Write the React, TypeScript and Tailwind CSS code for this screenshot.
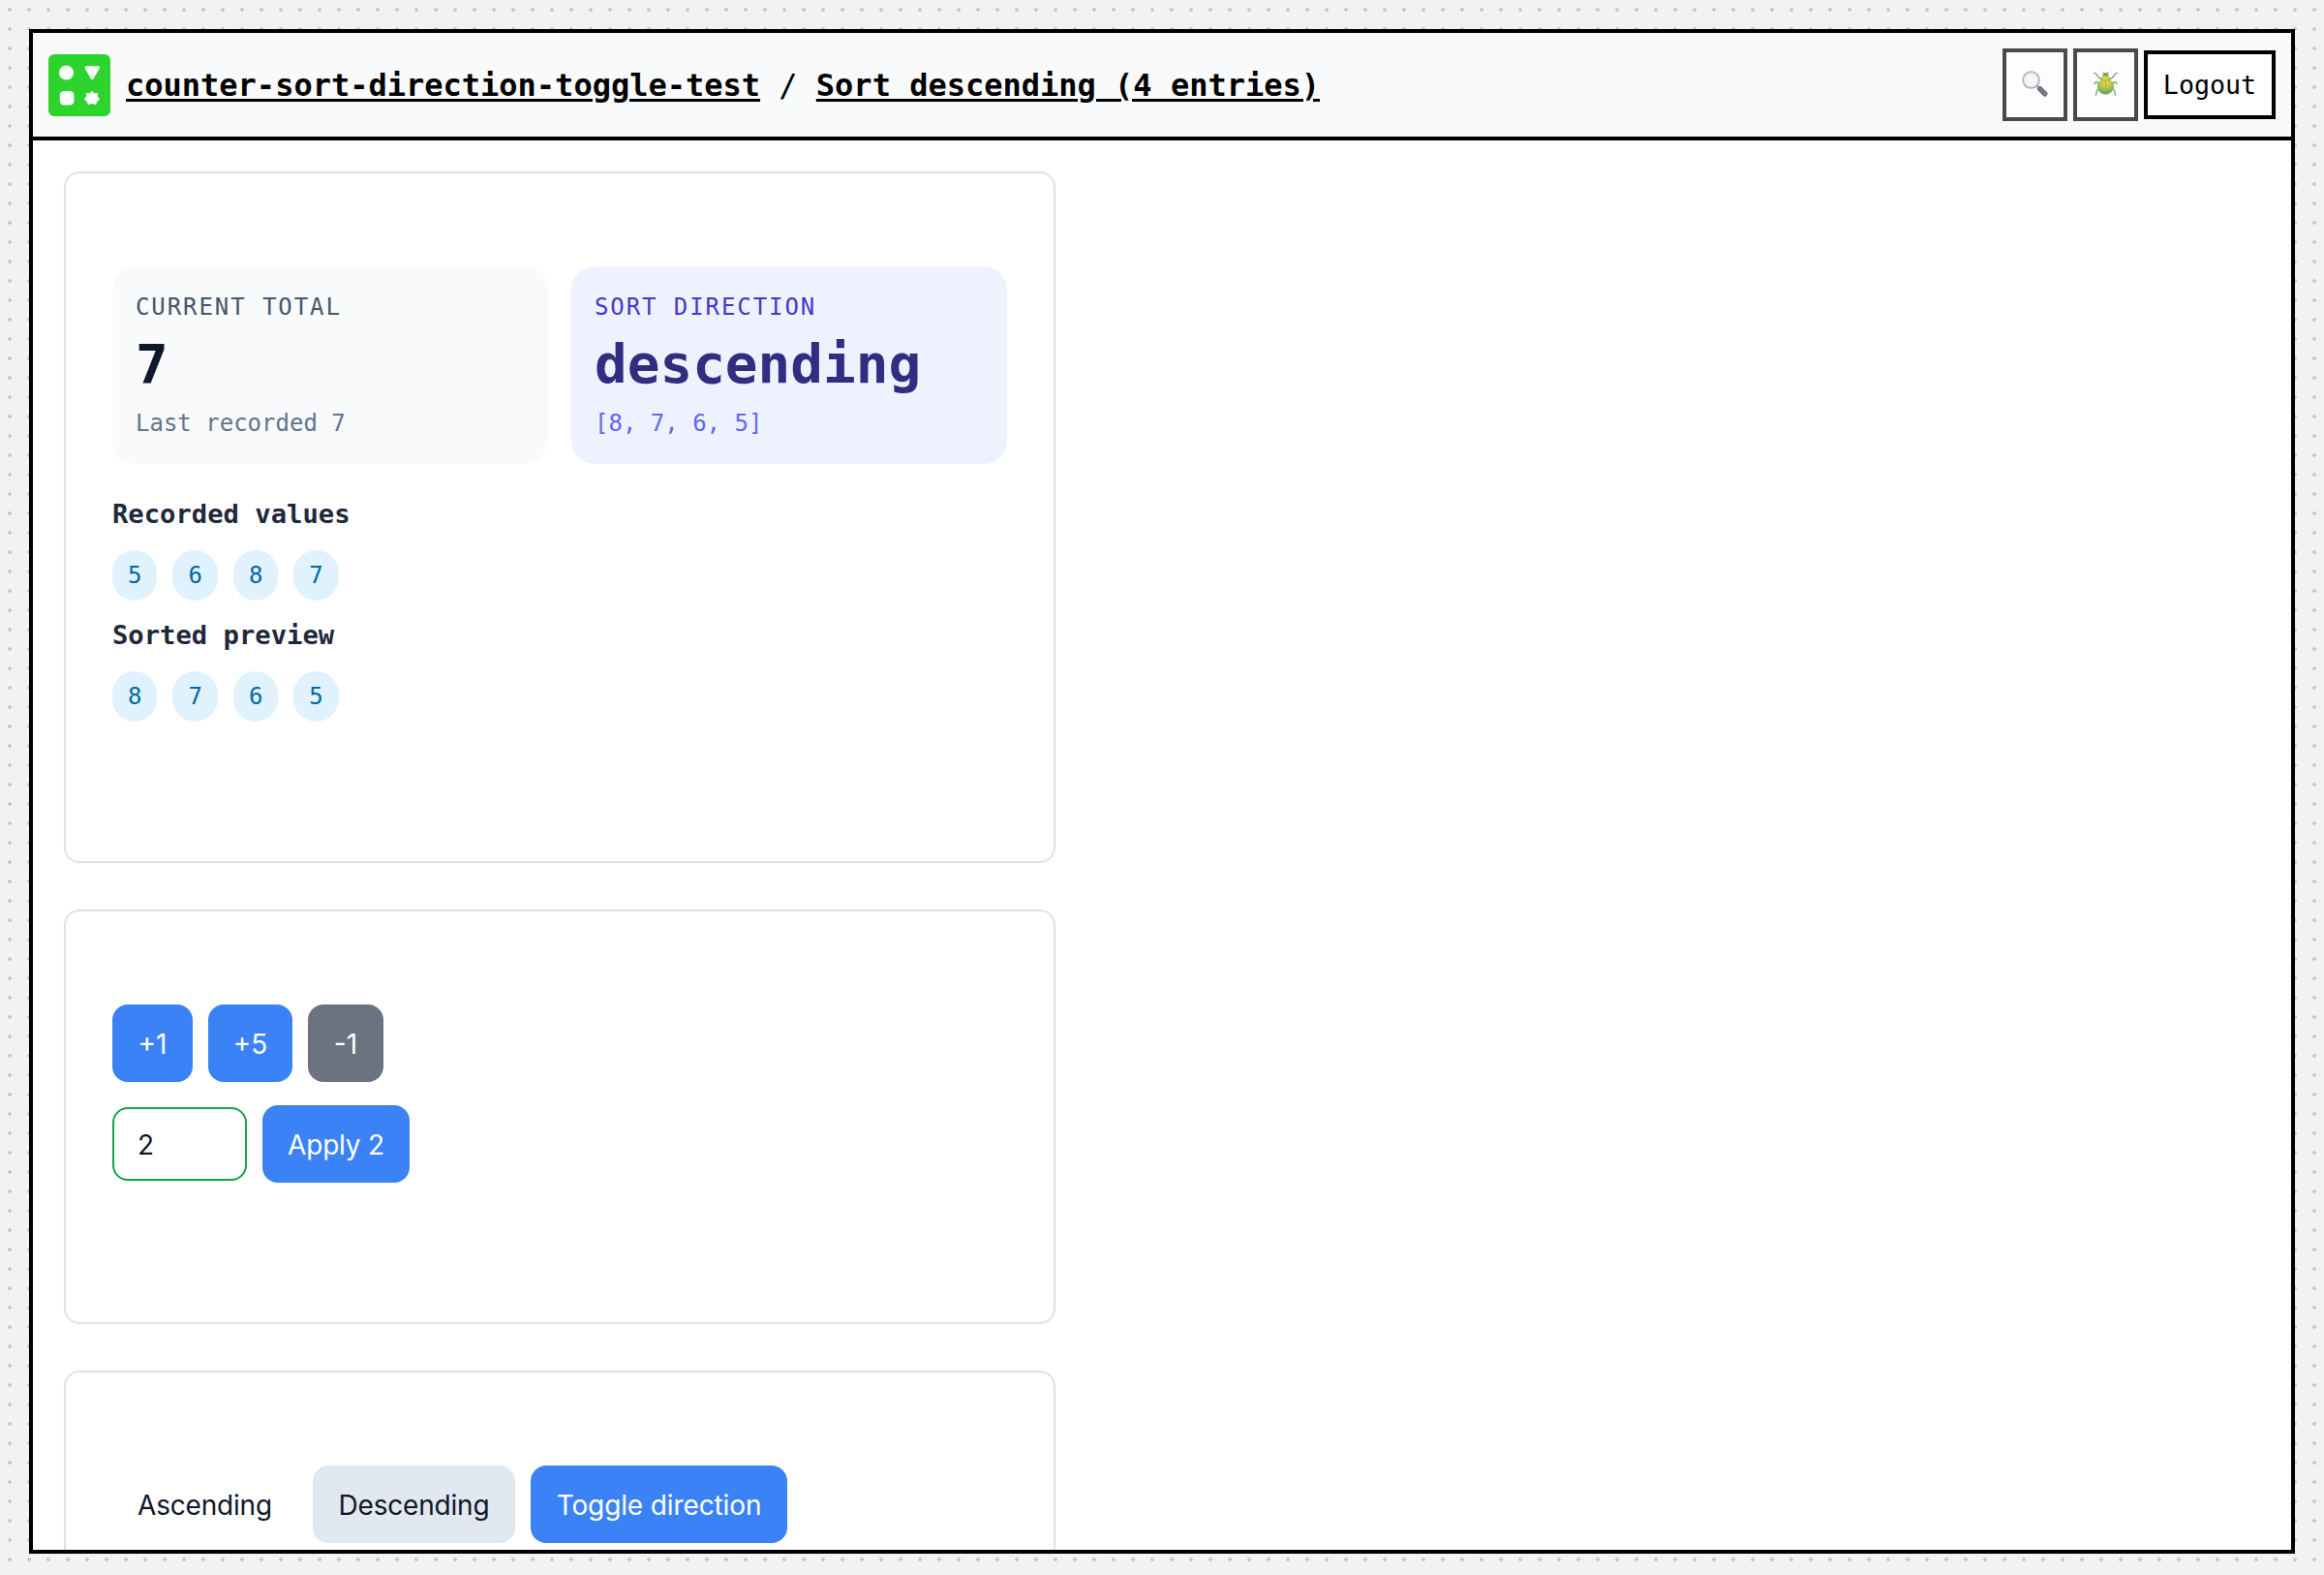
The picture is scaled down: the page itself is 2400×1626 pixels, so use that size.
import type { ReactNode } from 'react';

const mono = "font-['DejaVu_Sans_Mono',monospace]";

function Logo() {
  return (
    <svg viewBox="0 0 64 64" className="h-16 w-16 shrink-0">
      <rect width="64" height="64" rx="6" fill="#2dd42d" />
      <g fill="#fafbfd" stroke="#fafbfd" strokeLinejoin="round">
        <circle cx="18.5" cy="19" r="7.6" strokeWidth="0" />
        <path d="M39 13.8 H51.4 L45.2 24.4 Z" strokeWidth="3.2" />
        <rect x="11.8" y="38" width="14.6" height="14.6" rx="4.2" strokeWidth="0" />
        <path
          d="M45 39 L47.1 41.4 L50.2 41 L50 44.1 L52 46.6 L49.3 48.3 L48.6 51.2 L45 50 L41.4 51.2 L40.7 48.3 L38 46.6 L40 44.1 L39.8 41 L42.9 41.4 Z"
          strokeWidth="1.8"
        />
      </g>
    </svg>
  );
}

function MagnifierIcon() {
  return (
    <svg viewBox="0 0 27 27" className="h-[27px] w-[27px]">
      <defs>
        <linearGradient id="handle" x1="0" y1="1" x2="1" y2="0">
          <stop offset="0" stopColor="#111418" />
          <stop offset="0.55" stopColor="#4a5058" />
          <stop offset="1" stopColor="#15181c" />
        </linearGradient>
        <linearGradient id="rim" x1="0" y1="0" x2="0" y2="1">
          <stop offset="0" stopColor="#8b9db0" />
          <stop offset="1" stopColor="#868a90" />
        </linearGradient>
      </defs>
      <path d="M15.8 15.8 L19 19" stroke="#777b80" strokeWidth="2.4" />
      <path d="M18.6 18.6 L23.8 23.8" stroke="url(#handle)" strokeWidth="5.4" strokeLinecap="round" />
      <circle cx="9.6" cy="9.6" r="8.4" fill="#f3f4f6" stroke="url(#rim)" strokeWidth="1.7" />
      <circle cx="9.6" cy="9.6" r="7.1" fill="none" stroke="#d5dbe1" strokeWidth="0.8" />
    </svg>
  );
}

function BeetleIcon() {
  return (
    <svg viewBox="0 0 27 27" className="h-[27px] w-[27px]">
      <defs>
        <radialGradient id="shell" cx="0.5" cy="0.2" r="0.8">
          <stop offset="0" stopColor="#f5c000" />
          <stop offset="0.35" stopColor="#a8b800" />
          <stop offset="0.7" stopColor="#4f9e0a" />
          <stop offset="1" stopColor="#257010" />
        </radialGradient>
        <radialGradient id="thorax" cx="0.5" cy="0.6" r="0.6">
          <stop offset="0" stopColor="#ffd000" />
          <stop offset="0.6" stopColor="#b8bc00" />
          <stop offset="1" stopColor="#3f8a12" />
        </radialGradient>
      </defs>
      <g fill="none" stroke="#4a7f3c" strokeWidth="1.4" strokeLinecap="round" strokeLinejoin="round">
        <path d="M9 8.4 C6 7.6 5.4 6.6 4.8 4.8 C4.2 3.4 3 2.8 1.6 2.4 M18 8.4 C21 7.6 21.6 6.6 22.2 4.8 C22.8 3.4 24 2.8 25.4 2.4" />
        <path d="M6.4 12.4 L4 11.6 L1.8 13.4 M20.6 12.4 L23 11.6 L25.2 13.4" />
        <path d="M6.4 18.6 C4 19.4 4.2 21.4 4 22.8 L3.4 25 M20.6 18.6 C23 19.4 22.8 21.4 23 22.8 L23.6 25" />
        <path d="M12 2.8 L10.8 1.6 M15 2.8 L16.2 1.6" strokeWidth="1" />
      </g>
      <ellipse cx="13.5" cy="4.2" rx="2.9" ry="2.1" fill="#3a8418" />
      <path d="M13.5 4.8 C16.6 4.8 18.6 7 18.6 10 H8.4 C8.4 7 10.4 4.8 13.5 4.8 Z" fill="url(#thorax)" />
      <path
        d="M13.5 9.9 C18.6 9.6 22.2 11.2 22.2 15.2 C22.2 20.6 18 24.5 13.5 24.5 C9 24.5 4.8 20.6 4.8 15.2 C4.8 11.2 8.4 9.6 13.5 9.9 Z"
        fill="url(#shell)"
      />
      <path d="M8.4 9.9 Q13.5 8.9 18.6 9.9" fill="none" stroke="#7d8c08" strokeWidth="0.6" />
      <path d="M13.5 10.2 V24.2" stroke="#8a7a10" strokeWidth="0.8" />
    </svg>
  );
}

function IconButton({ label, children }: { label: string; children: ReactNode }) {
  return (
    <button
      aria-label={label}
      className="flex h-[75px] w-[67px] items-center justify-center border-4 border-black bg-white pb-0.5 opacity-70"
    >
      {children}
    </button>
  );
}

function Panel({ children }: { children: ReactNode }) {
  return (
    <section className="w-[1024px] shrink-0 rounded-2xl border-2 border-[#e2e2e2] px-12 pt-24 pb-36">
      {children}
    </section>
  );
}

function Values({ title, values }: { title: string; values: number[] }) {
  return (
    <div className="flex flex-col gap-4">
      <h3 className="text-[27.2px] leading-[1.5] font-bold text-[#1e293b]">{title}</h3>
      <div className="flex gap-4">
        {values.map((v) => (
          <span key={v} className="rounded-full bg-[#e0f2fe] px-4 py-2 text-2xl leading-[1.5] text-[#0369a1]">
            {v}
          </span>
        ))}
      </div>
    </div>
  );
}

const tones = {
  primary: 'bg-[#3b82f6] text-white',
  secondary: 'bg-[#6b7280] text-white',
  muted: 'bg-[#e2e8f0] text-[#0f172a]',
  ghost: 'text-[#0f172a]',
};

function Button({ tone = 'primary', width, children }: { tone?: keyof typeof tones; width: string; children: ReactNode }) {
  return (
    <button
      className={`h-20 rounded-2xl pt-0.5 text-center font-[Inter,sans-serif] text-[28px] font-[430] whitespace-nowrap ${width} ${tones[tone]}`}
    >
      {children}
    </button>
  );
}

export default function App() {
  return (
    <div
      className={`h-[1626px] w-[2400px] overflow-hidden bg-[#f2f2f2] bg-[radial-gradient(#c9c9c9_2px,transparent_2px)] bg-[size:20px_20px] px-[30px] pt-[30px] pb-[22px] ${mono}`}
    >
      <div className="flex h-full flex-col overflow-hidden border-4 border-black bg-white">
        <header className="flex h-[111px] shrink-0 items-center border-b-4 border-black bg-[#f9fafc] px-4">
          <Logo />
          <h1 className="ml-4 text-[32px] whitespace-pre text-black">
            <a className="font-bold underline decoration-[3px] underline-offset-[3px]">counter-sort-direction-toggle-test</a>
            {' / '}
            <a className="font-bold underline decoration-[3px] underline-offset-[3px]">Sort descending (4 entries)</a>
          </h1>
          <div className="ml-auto flex items-center gap-1.5">
            <IconButton label="Search">
              <MagnifierIcon />
            </IconButton>
            <IconButton label="Debug">
              <BeetleIcon />
            </IconButton>
            <button className="h-[71px] w-[136px] border-4 border-black bg-white text-[26.67px] text-black">Logout</button>
          </div>
        </header>

        <main className="flex min-h-0 flex-1 flex-col gap-12 overflow-hidden p-8">
          <Panel>
            <div className="flex flex-col gap-8">
              <div className="grid grid-cols-2 gap-6">
                <div className="rounded-3xl bg-[#f8fafc] p-6 leading-[1.5]">
                  <p className="text-[24px] tracking-[0.08em] text-[#475569]">CURRENT TOTAL</p>
                  <p className="pb-0.5 text-[56px] leading-[82px] font-bold text-[#0f172a]">7</p>
                  <p className="text-[24px] text-[#64748b]">Last recorded 7</p>
                </div>
                <div className="rounded-3xl bg-[#eef2ff] p-6 leading-[1.5]">
                  <p className="text-[24px] tracking-[0.08em] text-[#4338ca]">SORT DIRECTION</p>
                  <p className="pb-0.5 text-[56px] leading-[82px] font-bold text-[#312e81]">descending</p>
                  <p className="text-[24px] text-[#6366f1]">[8, 7, 6, 5]</p>
                </div>
              </div>
              <div className="flex flex-col gap-4">
                <Values title="Recorded values" values={[5, 6, 8, 7]} />
                <Values title="Sorted preview" values={[8, 7, 6, 5]} />
              </div>
            </div>
          </Panel>

          <Panel>
            <div className="flex flex-col gap-6">
              <div className="flex gap-4">
                <Button width="w-[83px]">+1</Button>
                <Button width="w-[87px]">+5</Button>
                <Button width="w-[78px]" tone="secondary">-1</Button>
              </div>
              <div className="flex items-center gap-4">
                <input
                  defaultValue="2"
                  className="h-[76px] w-[139px] rounded-2xl border-2 border-[#16a34a] bg-white px-6 pt-0.5 font-[Inter,sans-serif] text-[28px] text-[#0f172a]"
                />
                <Button width="w-[152px] tracking-[-0.2px]">Apply 2</Button>
              </div>
            </div>
          </Panel>

          <Panel>
            <div className="flex gap-4">
              <Button width="w-[191px] tracking-[-0.2px]" tone="ghost">Ascending</Button>
              <Button width="w-[209px] tracking-[-0.2px]" tone="muted">Descending</Button>
              <Button width="w-[265px] tracking-[-0.12px]">Toggle direction</Button>
            </div>
          </Panel>
        </main>
      </div>
    </div>
  );
}
